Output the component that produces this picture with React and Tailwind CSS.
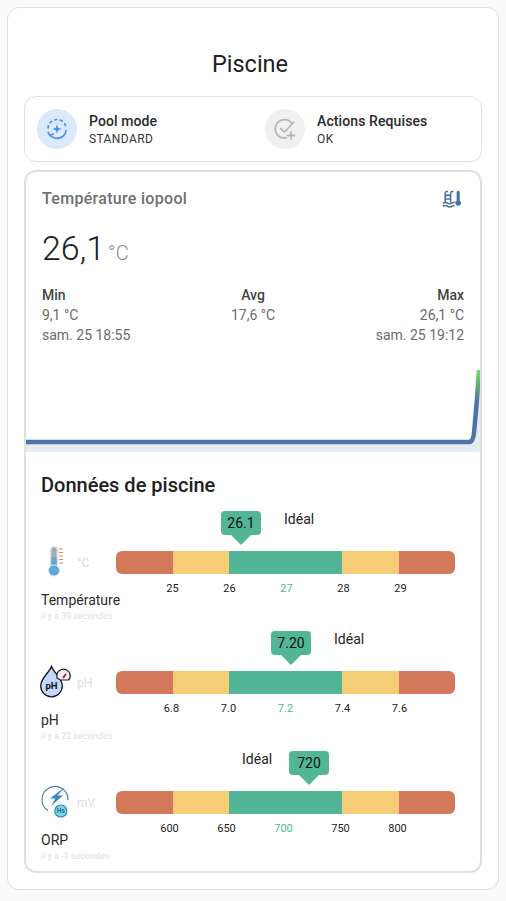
const ROBOTO = "font-['Roboto',sans-serif]";

const GAUGES = [
  {
    name: 'Température', unit: '°C', ago: 'il y a 39 secondes', value: '26.1',
    pill: 'left-[105px]', ideal: 'left-[168px]', ticks: ['25', '26', '27', '28', '29'], tickPad: 'pl-[28px]', Icon: ThermoIcon,
  },
  {
    name: 'pH', unit: 'pH', ago: 'il y a 22 secondes', value: '7.20',
    pill: 'left-[155px]', ideal: 'left-[218px]', ticks: ['6.8', '7.0', '7.2', '7.4', '7.6'], tickPad: 'pl-[27px]', Icon: PhIcon,
  },
  {
    name: 'ORP', unit: 'mV', ago: 'il y a -1 secondes', value: '720',
    pill: 'left-[173px]', ideal: 'left-[126px]', ticks: ['600', '650', '700', '750', '800'], tickPad: 'pl-[25px]', Icon: OrpIcon,
  },
];

function PoolModeIcon() {
  return (
    <svg width="22" height="22" viewBox="0 0 22 22" fill="none" stroke="#4a90e8" strokeWidth="1.7">
      <path d="M2 10.5A9 9 0 0 1 20 10.5" strokeDasharray="3.4 2.2" />
      <path d="M20 12.5a9 9 0 0 1-15.5 5" strokeLinecap="round" />
      <path d="M2.2 14.5l2 3.4 3-2" strokeLinecap="round" strokeLinejoin="round" />
      <path d="M11 6.5l1.2 3.3 3.3 1.2-3.3 1.2-1.2 3.3-1.2-3.3-3.3-1.2 3.3-1.2z" fill="#4a90e8" stroke="none" />
    </svg>
  );
}

function ActionsIcon() {
  return (
    <svg width="22" height="22" viewBox="0 0 22 22" fill="none" stroke="#b8b8b8" strokeWidth="1.8" strokeLinecap="round">
      <path d="M18 5.5A9.2 9.2 0 1 0 11 20h1" />
      <path d="M6.5 10.5l4 3.5 9-9.500" strokeLinejoin="round" />
      <path d="M17 14v7M13.500 17.500h7" />
    </svg>
  );
}

function PoolThermoIcon() {
  return (
    <svg className="mr-[2px]" width="20" height="20" viewBox="0 0 22 22" fill="none" stroke="#4a6f9f" strokeWidth="1.700">
      <path d="M3.500 15V4.500a2 2 0 0 1 3-1.500M9.500 15V4.500a2 2 0 0 1 3-1.500" />
      <path d="M3.500 7h6M3.500 11h6" />
      <path d="M1 15.500c2-1.200 3-1.200 5 0s3 1.200 5 0 2-1 3-.8M1 19c2-1.200 3-1.200 5 0s3 1.200 5 0 2-1 3-.8" />
      <path d="M17.800 2a1.700 1.700 0 0 1 1.700 1.700v9.300a3 3 0 1 1-3.400 0V3.700A1.700 1.700 0 0 1 17.800 2z" fill="#4a6f9f" stroke="none" />
    </svg>
  );
}

function ThermoIcon() {
  return (
    <svg width="36" height="36" viewBox="0 0 36 36">
      <rect x="10" y="1" width="8" height="24" rx="4" fill="#dcdcdc" />
      <rect x="11.500" y="2.500" width="5" height="22" rx="2.500" fill="#a9a9a9" />
      <rect x="11.500" y="12" width="5" height="13" fill="#5aa9d8" />
      <circle cx="14" cy="25.500" r="5.500" fill="#5aa9d8" stroke="#d9e6ee" strokeWidth="1" />
      <path d="M19 4h4M19 7.500h4M19 11h4M19 14.500h4M19 18h4" stroke="#d9836f" strokeWidth="1.200" />
    </svg>
  );
}

function PhIcon() {
  return (
    <svg width="36" height="36" viewBox="0 0 36 36">
      <path d="M11.500 1.500C9 8 .7 13 .7 21a10.800 10.800 0 0 0 21.600 0C22.300 13 14 8 11.500 1.500z" fill="#c3d8fb" stroke="#111" strokeWidth="1.300" />
      <text x="11.500" y="24" textAnchor="middle" fontSize="9.500" fontWeight="700" fontFamily="Roboto, sans-serif" fill="#111">pH</text>
      <path d="M17 13a6.500 6.500 0 0 1 13-4 6 6 0 0 1-1.500 6h-8z" fill="#f1f1f1" stroke="#222" strokeWidth="1.200" />
      <path d="M23 13l3-4" stroke="#a33" strokeWidth="2" />
    </svg>
  );
}

function OrpIcon() {
  return (
    <svg width="36" height="36" viewBox="0 0 36 36">
      <path d="M8 25.500A13 13 0 1 1 28 15" fill="none" stroke="#3f7fa8" strokeWidth="1.100" />
      <path d="M25 2L10 13.500h5.500L11 21l12-10.500h-5.500z" fill="#3d85bd" />
      <circle cx="20.800" cy="26" r="6" fill="#7fd6ea" stroke="#2a89b0" strokeWidth="1.200" />
      <text x="20.800" y="28.300" textAnchor="middle" fontSize="6.500" fontWeight="700" fontFamily="Roboto, sans-serif" fill="#2a6f90">Hs</text>
    </svg>
  );
}

function Chip({ tone, icon, title, sub }) {
  return (
    <div className="flex items-center gap-3 w-[228px] shrink-0">
      <div className={`w-10 h-10 rounded-full flex items-center justify-center ${tone}`}>{icon}</div>
      <div>
        <p className="text-sm font-medium leading-5 tracking-[0.1px] text-[#2b2b2b]">{title}</p>
        <p className="text-xs leading-4 tracking-[0.4px] text-[#333]">{sub}</p>
      </div>
    </div>
  );
}

function Stat({ align, label, value, time }) {
  return (
    <div className={`flex-1 text-sm leading-5 ${align}`}>
      <p className="font-medium text-[#444]">{label}</p>
      <p className="text-[#6b6b6b]">{value}</p>
      {time ? <p className="text-[#6b6b6b]">{time}</p> : null}
    </div>
  );
}

function Gauge({ g }) {
  const Icon = g.Icon;
  return (
    <div className="flex h-[120px]">
      <div className="w-[75px] pt-[35px]">
        <div className="flex items-center h-9 -ml-[1px]">
          <Icon />
          <span className="ml-[1px] text-xs text-[#dcdcdc]">{g.unit}</span>
        </div>
        <p className="mt-[9px] text-sm leading-5 text-[#2b2b2b] whitespace-nowrap">{g.name}</p>
        <p className="text-[9px] leading-3 text-[#dedede] whitespace-nowrap">{g.ago}</p>
      </div>
      <div className="relative w-[339px] pt-[41px]">
        <div className={`absolute top-[1px] ${g.pill} w-10 h-6 rounded bg-[#52b596] text-sm leading-6 text-center text-[#111]`}>
          {g.value}
          <span className="absolute left-[10px] top-6 w-0 h-0 border-x-[10px] border-x-transparent border-t-[10px] border-t-[#52b596]" />
        </div>
        <span className={`absolute top-[1px] ${g.ideal} text-sm leading-4 text-[#222]`}>Idéal</span>
        <div className="flex h-[23px] rounded-md overflow-hidden">
          <div className="w-[57px] bg-[#d3785a]" />
          <div className="w-[56px] bg-[#f5cd76]" />
          <div className="w-[113px] bg-[#52b596]" />
          <div className="w-[57px] bg-[#f5cd76]" />
          <div className="w-[56px] bg-[#d3785a]" />
        </div>
        <div className={`flex mt-[7px] ${g.tickPad} text-[11px] leading-4 text-[#222]`}>
          {g.ticks.map((t, i) => (
            <span key={t} className={`w-[57px] text-center ${i === 2 ? 'text-[#52b596]' : ''}`}>{t}</span>
          ))}
        </div>
      </div>
    </div>
  );
}

export default function App() {
  return (
    <div className={`${ROBOTO} min-h-[901px] bg-[#fafafa] p-[7px]`}>
      <div className="h-[883px] rounded-xl border border-[#e0e0e0] bg-white px-4">
        <h1 className="pt-10 pr-[6px] text-[23.5px] leading-8 text-center text-[#212121]">Piscine</h1>
        <div className="mt-4 h-[66px] rounded-xl border border-[#e0e0e0] flex items-center pl-3">
          <Chip tone="bg-[#dbe9fc]" icon={<PoolModeIcon />} title="Pool mode" sub="STANDARD" />
          <Chip tone="bg-[#f0f0f0]" icon={<ActionsIcon />} title="Actions Requises" sub="OK" />
        </div>
        <div className="mt-2 h-[703px] rounded-xl border-2 border-[#e0e0e0] overflow-hidden">
          <div className="px-4 pt-[17px]">
            <div className="flex items-center justify-between h-5">
              <p className="text-base font-medium tracking-[0.3px] text-[#707070]">Température iopool</p>
              <PoolThermoIcon />
            </div>
            <p className="mt-[15px] h-12 flex items-baseline">
              <span className="text-[34px] leading-[48px] font-light text-[#212121]">26,1</span>
              <span className="ml-[3px] text-xl text-[#8a8a8a] font-light">°C</span>
            </p>
            <div className="mt-[13px] flex">
              <Stat align="text-left" label="Min" value="9,1 °C" time="sam. 25 18:55" />
              <Stat align="text-center" label="Avg" value="17,6 °C" />
              <Stat align="text-right" label="Max" value="26,1 °C" time="sam. 25 19:12" />
            </div>
          </div>
          <svg className="block -mt-[2px]" width="454" height="109" viewBox="0 0 454 109">
            <defs>
              <linearGradient id="spark" x1="0" y1="27" x2="0" y2="60" gradientUnits="userSpaceOnUse">
                <stop offset="0" stopColor="#6fe05a" />
                <stop offset="1" stopColor="#4e74a3" />
              </linearGradient>
            </defs>
            <path d="M0 99H445Q449 99 450 90 452 60 454 27V109H0Z" fill="#e6eaf1" />
            <path d="M0 99H443Q447 99 448 90 451 60 453 27" fill="none" stroke="url(#spark)" strokeWidth="4.500" />
          </svg>
          <div className="px-[15px]">
            <h2 className="mt-[19px] text-xl leading-7 font-medium text-[#212121]">Données de piscine</h2>
            <div className="mt-[11px]">
              {GAUGES.map((g) => <Gauge key={g.name} g={g} />)}
            </div>
          </div>
        </div>
      </div>
    </div>
  );
}
